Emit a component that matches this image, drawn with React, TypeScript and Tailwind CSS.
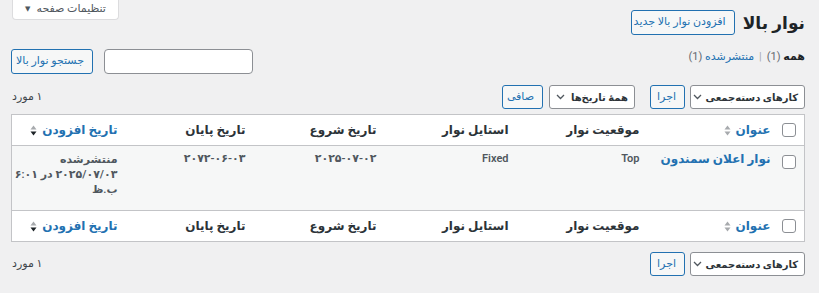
import type { ReactNode } from 'react'

function SortIcon({ active }: { active?: boolean }) {
  return (
    <svg width="7" height="11" viewBox="0 0 7 11" className="inline-block">
      <path d="M3.5 0.5 L6.5 4.5 L0.5 4.5 Z" fill="#a7aaad" />
      <path d="M3.5 10.5 L6.5 6.5 L0.5 6.5 Z" fill={active ? '#1d2327' : '#a7aaad'} />
    </svg>
  )
}

function Checkbox() {
  return <span className="block w-[14px] h-[14px] rounded-[3px] border border-[#8c8f94] bg-white" />
}

function Select({ label, width }: { label: string; width: string }) {
  return (
    <div className={`flex items-center justify-between gap-[4px] h-[24px] ${width} pr-[6px] pl-[6px] bg-white border border-[#8c8f94] rounded-[3px] text-[#2c3338] text-[10px] font-semibold whitespace-nowrap overflow-hidden`}>
      <span>{label}</span>
      <svg width="9" height="6" viewBox="0 0 9 6" className="shrink-0">
        <path d="M1 1 L4.5 4.5 L8 1" stroke="#50575e" strokeWidth="1.3" fill="none" />
      </svg>
    </div>
  )
}

function Button({ children, className = '' }: { children: ReactNode; className?: string }) {
  return (
    <button
      type="button"
      className={`h-[24px] px-[8px] border border-[#2271b1] bg-[#f6f7f7] text-[#2271b1] rounded-[3px] text-[11px] whitespace-nowrap ${className}`}
    >
      {children}
    </button>
  )
}

function HeadRow({ top }: { top?: boolean }) {
  const border = top ? 'border-b' : 'border-t'
  return (
    <tr className={`bg-white ${border} border-[#c3c4c7] text-[12px] text-[#2c3338]`}>
      <td className="h-[31px] pr-[8px] align-middle">
        <Checkbox />
      </td>
      <th className="text-right font-semibold pr-[10px]">
        <span className="inline-flex items-center gap-[5px] text-[#2271b1]">
          عنوان <SortIcon />
        </span>
      </th>
      <th className="text-right font-semibold pr-[10px]">موقعیت نوار</th>
      <th className="text-right font-semibold pr-[10px]">استایل نوار</th>
      <th className="text-right font-semibold pr-[10px]">تاریخ شروع</th>
      <th className="text-right font-semibold pr-[10px]">تاریخ پایان</th>
      <th className="text-right font-semibold pr-[10px]">
        <span className="inline-flex items-center gap-[5px] text-[#2271b1]">
          تاریخ افزودن <SortIcon active />
        </span>
      </th>
    </tr>
  )
}

export default function App() {
  return (
    <div
      dir="rtl"
      className="relative w-[819px] h-[293px] overflow-hidden whitespace-nowrap bg-[#f0f0f1] text-[12px] text-[#3c434a] font-['Roboto','DejaVu_Sans',sans-serif] pr-[14px] pl-[11px]"
    >
      {/* Title row + screen options */}
      <div className="flex justify-between items-start">
        <div className="flex items-center gap-[8px] pt-[10px]">
          <h1 className="text-[17px] font-bold text-[#1d2327] leading-[24px]">نوار بالا</h1>
          <Button className="h-[25px] w-[104px] px-0 text-[10px]">افزودن نوار بالا جدید</Button>
        </div>
        <div className="w-[107px] h-[20px] bg-white border border-t-0 border-[#dcdcde] rounded-b-[4px] flex items-center justify-center gap-[6px] text-[#50575e] text-[11px] ml-[1px]">
          <span>تنظیمات صفحه</span>
          <span className="text-[7px]">▼</span>
        </div>
      </div>

      {/* Views + search */}
      <div className="flex justify-between items-start mt-[14px]">
        <div className="text-[11px] text-[#646970]">
          <span className="font-bold text-[#1d2327]">همه</span> (1)
          <span className="text-[#a7aaad] mx-[5px]">|</span>
          <span className="text-[#2271b1]">منتشرشده</span> (1)
        </div>
        <div className="flex items-center gap-[11px]">
          <div className="w-[149px] h-[25px] bg-white border border-[#8c8f94] rounded-[4px]" />
          <Button className="h-[25px] w-[82px] px-0 text-[10px]">جستجو نوار بالا</Button>
        </div>
      </div>

      {/* Top tablenav */}
      <div className="flex items-center justify-between mt-[11px] h-[24px] mb-[5px]">
        <div className="flex items-center">
          <Select label="کارهای دسته‌جمعی" width="w-[115px]" />
          <Button className="mr-[5px] w-[35px] px-0">اجرا</Button>
          <Select label="همهٔ تاریخ‌ها" width="w-[86px] mr-[15px]" />
          <Button className="mr-[6px] w-[41px] px-0">صافی</Button>
        </div>
        <span className="text-[11px] text-[#3c434a] ml-[1px]">۱ مورد</span>
      </div>

      {/* Table */}
      <table className="w-[794px] table-fixed border-collapse border border-[#c3c4c7]">
        <colgroup>
          <col className="w-[24px]" />
          <col className="w-[131px]" />
          <col className="w-[131px]" />
          <col className="w-[132px]" />
          <col className="w-[131px]" />
          <col className="w-[128px]" />
          <col />
        </colgroup>
        <thead>
          <HeadRow top />
        </thead>
        <tbody>
          <tr className="bg-[#f6f7f7] align-top text-[11px] text-[#50575e] font-semibold">
            <td className="h-[65px] pr-[8px] pt-[9px]">
              <Checkbox />
            </td>
            <td className="pr-[10px] pt-[4px]">
              <span className="text-[#2271b1] font-bold text-[12px]">نوار اعلان سمندون</span>
            </td>
            <td className="pr-[10px] pt-[5px]">Top</td>
            <td className="pr-[10px] pt-[5px]">Fixed</td>
            <td className="pr-[10px] pt-[5px]">۲۰۲۵-۰۷-۰۲</td>
            <td className="pr-[10px] pt-[5px]">۲۰۷۲-۰۶-۰۳</td>
            <td className="pr-[10px] pt-[6px] leading-[15px]">
              منتشرشده
              <br />
              ۲۰۲۵/۰۷/۰۳ در ۶:۰۱
              <br />
              ب.ظ
            </td>
          </tr>
        </tbody>
        <tfoot>
          <HeadRow />
        </tfoot>
      </table>

      {/* Bottom tablenav */}
      <div className="flex items-center justify-between mt-[10px] h-[24px]">
        <div className="flex items-center">
          <Select label="کارهای دسته‌جمعی" width="w-[115px]" />
          <Button className="mr-[5px] w-[35px] px-0">اجرا</Button>
        </div>
        <span className="text-[11px] text-[#3c434a] ml-[1px]">۱ مورد</span>
      </div>
    </div>
  )
}
